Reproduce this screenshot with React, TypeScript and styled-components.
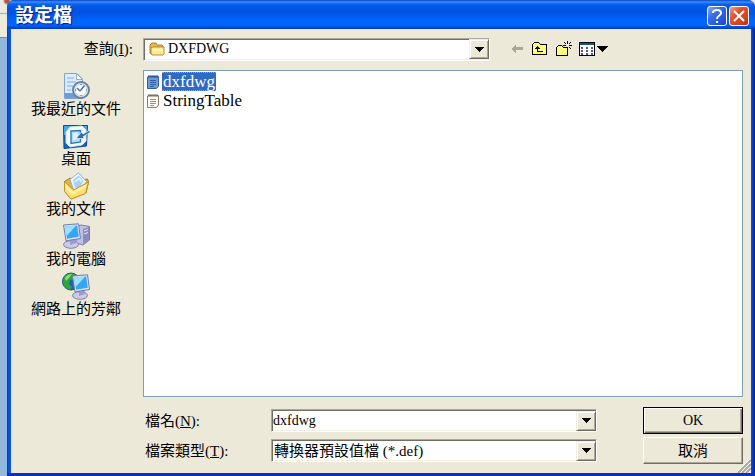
import React from "react";
import styled, { createGlobalStyle, css } from "styled-components";

const GlobalStyle = createGlobalStyle`
  *, *::before, *::after { box-sizing: border-box; }
  body {
    margin: 0;
    font-family: "Liberation Serif", "Noto Sans CJK TC", serif;
    font-size: 15px;
    line-height: 18px;
    color: #000;
  }
  button, input, select { font: inherit; color: inherit; border-radius: 0; margin: 0; }
  svg { display: block; flex: none; }
`;

const Desktop = styled.div`
  display: flex;
  min-height: 100vh;
  padding-left: 7px;
  background:
    radial-gradient(circle at 7px 1px, #b5543e 0 2px, transparent 4px),
    linear-gradient(#ece9e0 0 13px, #b4ae9c 13px 14px, #efebdb 14px 37px, #8c8878 37px 38px, #92b8db 38px);
`;

const Dialog = styled.main`
  flex: 1;
  min-width: 0;
  display: flex;
  flex-direction: column;
  background: linear-gradient(90deg, #0831d9, #0855e8 2px, #0855dd 4px, #0855dd calc(100% - 4px), #0745d8 calc(100% - 3px), #001a9c);
  border-bottom: 3px solid #0831c4;
  border-radius: 7px 7px 0 0;
`;

const TitleBar = styled.header`
  display: flex;
  align-items: center;
  gap: 2px;
  height: 29px;
  padding: 3px 6px 0 8px;
  border-radius: 7px 7px 0 0;
  background: linear-gradient(#0a48c8, #3a8cff 2px, #0a62ee 4px, #0054e3 8px, #0055e6 14px, #0063fb 20px, #0066ff 25px, #0050dc 27px, #0038b8);
`;

const Title = styled.h1`
  flex: 1;
  margin: 0;
  color: #fff;
  font-size: 19px;
  line-height: 24px;
  font-weight: 700;
  text-shadow: 1px 1px 1px #0a1883;
`;

const CaptionButton = styled.button<{ $close?: boolean }>`
  display: grid;
  place-items: center;
  width: 20px;
  height: 20px;
  padding: 0;
  border: 1px solid #fff;
  border-radius: 3px;
  background: ${(p) =>
    p.$close
      ? "linear-gradient(135deg, #f0a088, #e2532f 35%, #d8401c 75%, #b52c0c)"
      : "linear-gradient(135deg, #8aaef5, #3b6de8 35%, #2558de 75%, #1a44b8)"};
`;

const Body = styled.form`
  flex: 1;
  display: grid;
  grid-template-columns: 130px minmax(0, 1fr);
  grid-template-rows: 22px minmax(0, 1fr) auto;
  column-gap: 2px;
  row-gap: 10px;
  margin: 0 4px;
  padding: 9px 8px 9px 0;
  background: #ece9d8;
`;

const LookLabel = styled.label`
  padding-right: 8px;
  text-align: right;
  line-height: 22px;
`;

const LookRow = styled.div`
  display: flex;
  align-items: center;
`;

const Combo = styled.div<{ $look?: boolean }>`
  display: grid;
  grid-template-columns: ${(p) => (p.$look ? "23px minmax(0, 1fr) 20px" : "0 minmax(0, 1fr) 20px")};
  align-items: center;
  height: 23px;
  ${(p) => p.$look && css`flex: 0 1 347px; font-size: 14px;`}
  border: 1px solid;
  border-color: #aca899 #fff #fff #aca899;
  box-shadow: inset 1px 1px #716f64, inset -1px -1px #f1efe2;
  background: #fff;
  & > svg { grid-area: 1 / 1; margin-left: 5px; pointer-events: none; z-index: 1; }
`;

const fieldStyle = css`
  width: 100%;
  height: 19px;
  padding: 0;
  border: 0;
  background: transparent;
  outline: 0;
`;

const ComboSelect = styled.select<{ $inset: number }>`
  ${fieldStyle}
  grid-area: 1 / 1 / 2 / 4;
  appearance: none;
  padding-left: ${(p) => p.$inset}px;
`;

const ComboInput = styled.input`
  ${fieldStyle}
  grid-area: 1 / 2;
  padding-left: 1px;
  font-size: 14px;
`;

const arrowFace = css`
  grid-area: 1 / 3;
  display: grid;
  place-items: center;
  width: 20px;
  height: 20px;
  padding: 0;
  border: 1px solid;
  border-color: #f1efe2 #716f64 #716f64 #f1efe2;
  box-shadow: inset 1px 1px #fff, inset -1px -1px #aca899;
  background: #ece9d8;
`;
const ArrowFace = styled.span`${arrowFace} pointer-events: none;`;
const ArrowButton = styled.button`${arrowFace}`;

const Tools = styled.div`
  display: flex;
  align-items: center;
  gap: 7px;
  margin-left: 20px;
`;

const ToolButton = styled.button`
  padding: 0;
  border: 0;
  background: transparent;
`;

const Places = styled.nav`
  display: flex;
  flex-direction: column;
  gap: 2px;
  padding-top: 1px;
`;

const Place = styled.button`
  display: flex;
  flex-direction: column;
  align-items: center;
  height: 48px;
  padding: 1px 0 0;
  border: 0;
  background: transparent;
  line-height: 18px;
  white-space: nowrap;
`;

const FileList = styled.ul`
  margin: 0;
  padding: 1px 2px;
  list-style: none;
  border: 1px solid #7f9db9;
  background: #fff;
  font-size: 17px;
`;

const FileItem = styled.li`
  display: flex;
  align-items: center;
  gap: 2px;
  height: 19px;
`;

const FileName = styled.button<{ $selected?: boolean }>`
  height: 19px;
  padding: 0 1px;
  border: ${(p) => (p.$selected ? "1px dotted #d69a4a" : "1px solid transparent")};
  border-width: 1px 0;
  background: ${(p) => (p.$selected ? "#316ac5" : "transparent")};
  color: ${(p) => (p.$selected ? "#fff" : "#000")};
  line-height: 17px;
`;

const Footer = styled.div`
  grid-column: 2;
  display: grid;
  grid-template-columns: 128px minmax(0, 326px) minmax(10px, 1fr) 100px;
  row-gap: 3px;
  align-items: center;
`;

const FieldLabel = styled.label`
  padding-left: 2px;
`;

const PushButton = styled.button<{ $default?: boolean }>`
  grid-column: 4;
  height: 27px;
  padding: 0;
  border: 1px solid;
  border-color: ${(p) => (p.$default ? "#000" : "#fff #716f64 #716f64 #fff")};
  box-shadow: ${(p) =>
    p.$default ? "inset 1px 1px #fff, inset -1px -1px #716f64, inset -2px -2px #aca899" : "inset -1px -1px #aca899"};
  background: #ece9d8;
  font-size: ${(p) => (p.$default ? 14 : 15)}px;
`;

const Grip = styled.svg`
  position: absolute;
  right: 4px;
  bottom: 3px;
`;

const Frame = styled.div`
  position: relative;
  flex: 1;
  display: flex;
  min-width: 0;
`;

const Down = () => (
  <svg width="10" height="5" viewBox="0 0 10 5" shapeRendering="crispEdges"><path d="M0 0H10L5 5Z" /></svg>
);

const Folder = () => (
  <svg width="16" height="16" viewBox="0 0 16 16">
    <path d="M1 12V4L3 2H7L8 4H13L14 5V13H2Z" fill="#e7b84b" stroke="#aa802c" />
    <path d="M3 6H15V13L14 14H3L2 12V7Z" fill="#ffe994" stroke="#b58c38" />
    <path d="M4 8H14V10H4Z" fill="#fff6ba" />
  </svg>
);

const Notepad = ({ selected = false }: { selected?: boolean }) => (
  <svg width="14" height="16" viewBox="0 0 14 16">
    <path d="M2 2.5H12.5V12L10.5 14.5H1.5V3Z" fill={selected ? "#719bd8" : "#fffdf2"} stroke={selected ? "#365e9d" : "#807d72"} />
    <path d="M3 1V4M5 1V4M7 1V4M9 1V4M11 1V4" stroke={selected ? "#285391" : "#756b4c"} />
    <path d="M4 6.5H10M4 8.5H10M4 10.5H10M4 12.5H8" stroke={selected ? "#315f9e" : "#8f9197"} />
  </svg>
);

const Recent = () => (
  <svg width="30" height="28" viewBox="0 0 30 28">
    <path d="M3.5 1.5H16L21.5 7V26.5H3.5Z" fill="#dcecff" stroke="#7fa3d0" />
    <path d="M15.5 1.5V7.5H21.5Z" fill="#fff" stroke="#8caed5" />
    <path d="M6 6H13M6 10H15M6 14H12M6 18H10" stroke="#a9cdf5" strokeWidth="2" />
    <path d="M4 21H21V26H4Z" fill="#6d9be0" />
    <circle cx="20" cy="18" r="8" fill="#dcebf5" stroke="#6f8296" strokeWidth="2" />
    <circle cx="20" cy="18" r="6" fill="#f8fdff" stroke="#c5d6e4" />
    <path d="M19 19L23.5 13.5M19 19L16 16" stroke="#4b78b8" strokeWidth="1.6" fill="none" />
    <path d="M20 12V13M26 18H25M20 24V23M14 18H15" stroke="#315d92" />
  </svg>
);

const DesktopIcon = () => (
  <svg width="30" height="28" viewBox="0 0 30 28">
    <path d="M2.5 3.5H26.5L25.5 24L3 26.5Z" fill="#1467c0" stroke="#0a4c96" />
    <path d="M3 4H26V9L3 13Z" fill="#4aa4ea" />
    <path d="M9 5L21 4L25 8V19L21 23L9 25L5 21V10Z" fill="#f7fbf6" stroke="#c9e2ee" />
    <path d="M10 9L19.5 8.5V20L10 21.5Z" fill="#b4dcf8" stroke="#2c7cc4" strokeWidth="1.4" />
    <path d="M12 11L17 10.5V17L12 18Z" fill="#dcf1ff" />
    <path d="M29 8L22 12L20.5 10L15 16.5L23 16.5L22.5 14.5L29 10.5Z" fill="#356f9f" stroke="#eef9ff" strokeWidth=".7" />
  </svg>
);

const Documents = () => (
  <svg width="30" height="28" viewBox="0 0 30 28">
    <path d="M3.5 9.5L9 6L14 9L26.5 7L27.5 10L25 21L10 27L3.5 19Z" fill="#e3b23a" stroke="#a57c22" />
    <path d="M9 7.5L17.5 .8L25.5 9.5L21 18L13 19Z" fill="#eaf6ff" stroke="#88b4db" />
    <path d="M12 8L17.5 3.5L22.5 9L19 15L14 16Z" fill="#a9d0fa" />
    <path d="M14 10L18 6.5L20.5 9.5" fill="none" stroke="#e7f5ff" strokeWidth="1.6" />
    <path d="M3.5 9.5L12.5 18L27.5 10L24.5 21.5L10 27L3.5 19.5Z" fill="#ffdf6e" stroke="#bf942d" />
    <path d="M4.5 12L12 19.5L25.5 12.5L24.8 15.5L11 23L4.5 16Z" fill="#fff1a4" />
  </svg>
);

const Screen = ({ x = 0, y = 0 }: { x?: number; y?: number }) => (
  <g transform={`translate(${x} ${y})`}>
    <ellipse cx="9" cy="21.5" rx="7.5" ry="3.8" fill="#cbcae8" stroke="#8082ae" />
    <path d="M8 15H14V20L8 22Z" fill="#9d9dca" />
    <path d="M1.5 2L16.5 .8L18.5 15.5L4 17.8Z" fill="#dde7f8" stroke="#7379aa" />
    <path d="M3 3.5L15.2 2.6L16.8 13.8L5 15.8Z" fill="#37a5f2" />
    <path d="M3 3.5L14 2.7L4.6 13Z" fill="#9be2ff" />
  </g>
);

const Computer = () => (
  <svg width="30" height="28" viewBox="0 0 30 28">
    <path d="M15 5L20 3L28.5 4.5V18L22 23L15 21Z" fill="#c2c1e2" stroke="#7d7ba8" />
    <path d="M22 7L28 5V18L22 22.5Z" fill="#8d8bb9" />
    <path d="M23 9L27 7.5M23 12L27 10.5" stroke="#e8e8fa" />
    <Screen x={1} y={1} />
  </svg>
);

const Network = () => (
  <svg width="30" height="28" viewBox="0 0 30 28">
    <circle cx="10" cy="9.5" r="8.5" fill="#1c63b8" stroke="#12508a" />
    <path d="M3 5C6 1 11 0 15 3L13 7L9 8L8 12L11 15L9 18C4 17 1 12 2 8Z" fill="#2fa43a" />
    <path d="M4 6C6 3 8 2 11 2L8 6L5 9Z" fill="#91dd6a" />
    <Screen x={10} y={2} />
  </svg>
);

const places = [
  { label: "我最近的文件", Icon: Recent },
  { label: "桌面", Icon: DesktopIcon },
  { label: "我的文件", Icon: Documents },
  { label: "我的電腦", Icon: Computer },
  { label: "網路上的芳鄰", Icon: Network },
];

export default function App() {
  return (
    <>
      <GlobalStyle />
      <Desktop>
        <Frame>
          <Dialog>
            <TitleBar>
              <Title>設定檔</Title>
              <CaptionButton type="button" aria-label="說明">
                <svg width="14" height="16" viewBox="0 0 14 16" fill="none" stroke="#fff" strokeWidth="2">
                  <path d="M3 5C3 1 11 1 11 5C11 8 7 7 7 11M7 13V15" />
                </svg>
              </CaptionButton>
              <CaptionButton type="button" $close aria-label="關閉">
                <svg width="14" height="14" viewBox="0 0 14 14" stroke="#fff" strokeWidth="2">
                  <path d="M2 2L12 12M12 2L2 12" />
                </svg>
              </CaptionButton>
            </TitleBar>
            <Body onSubmit={(e) => e.preventDefault()}>
              <LookLabel htmlFor="look">查詢(<u>I</u>):</LookLabel>
              <LookRow>
                <Combo $look>
                  <Folder />
                  <ComboSelect id="look" $inset={24}><option>DXFDWG</option></ComboSelect>
                  <ArrowFace><Down /></ArrowFace>
                </Combo>
                <Tools>
                  <ToolButton type="button" aria-label="上一頁">
                    <svg width="14" height="16" viewBox="0 0 14 16" shapeRendering="crispEdges">
                      <path d="M1 8L6 3V6H13V9H6V13Z" fill="#aca899" />
                    </svg>
                  </ToolButton>
                  <ToolButton type="button" aria-label="上一層">
                    <svg width="17" height="16" viewBox="0 0 17 16" shapeRendering="crispEdges">
                      <path d="M1.5 13.5V3.5L3.5 1.5H7.5L9.5 3.5H15.5V13.5Z" fill="#ffff7b" stroke="#000" />
                      <path d="M4 7H5V6H6V5H7V6H8V7H9V8H7V10H12V11H6V8H4Z" />
                    </svg>
                  </ToolButton>
                  <ToolButton type="button" aria-label="新資料夾">
                    <svg width="17" height="16" viewBox="0 0 17 16" shapeRendering="crispEdges">
                      <path d="M1.5 14.5V6.5L3.5 4.5H6.5L8.5 6.5H12.5V14.5Z" fill="#ffff7b" stroke="#000" />
                      <path d="M12 0H13V3H12ZM12 6H13V9H12ZM8 4H11V5H8ZM14 4H17V5H14ZM9 1H10V2H9ZM10 2H11V3H10ZM15 1H16V2H15ZM14 2H15V3H14ZM14 6H15V7H14ZM15 7H16V8H15ZM10 6H11V7H10Z" />
                    </svg>
                  </ToolButton>
                  <ToolButton type="button" aria-label="檢視">
                    <svg width="30" height="16" viewBox="0 0 30 16" shapeRendering="crispEdges">
                      <path d="M.5 1.5H15.5V14.5H.5Z" fill="#fff" stroke="#000" />
                      <path d="M1 2H15V4H1Z" fill="#174f9d" />
                      <path d="M2 6H4V8H2ZM7 6H9V8H7ZM12 6H14V8H12ZM2 9H4V11H2ZM7 9H9V11H7ZM12 9H14V11H12ZM2 12H4V14H2ZM7 12H9V14H7ZM12 12H14V14H12Z" fill="#53558f" />
                      <path d="M18 5H29L23.5 11Z" />
                    </svg>
                  </ToolButton>
                </Tools>
              </LookRow>
              <Places>
                {places.map(({ label, Icon }) => (
                  <Place type="button" key={label}><Icon />{label}</Place>
                ))}
              </Places>
              <FileList>
                <FileItem><Notepad selected /><FileName type="button" $selected>dxfdwg</FileName></FileItem>
                <FileItem><Notepad /><FileName type="button">StringTable</FileName></FileItem>
              </FileList>
              <Footer>
                <FieldLabel htmlFor="name">檔名(<u>N</u>):</FieldLabel>
                <Combo>
                  <ComboInput id="name" defaultValue="dxfdwg" />
                  <ArrowButton type="button" aria-label="檔名清單"><Down /></ArrowButton>
                </Combo>
                <PushButton type="submit" $default>OK</PushButton>
                <FieldLabel htmlFor="type">檔案類型(<u>T</u>):</FieldLabel>
                <Combo>
                  <ComboSelect id="type" $inset={2}><option>轉換器預設值檔 (*.def)</option></ComboSelect>
                  <ArrowFace><Down /></ArrowFace>
                </Combo>
                <PushButton type="button">取消</PushButton>
              </Footer>
            </Body>
          </Dialog>
          <Grip width="14" height="14" viewBox="0 0 14 14" aria-hidden="true">
            <path d="M1 14L14 1M5 14L14 5M9 14L14 9" stroke="#aca899" strokeWidth="2" />
            <path d="M0 13L13 0M4 13L14 3M8 13L14 7" stroke="#fff" />
          </Grip>
        </Frame>
      </Desktop>
    </>
  );
}
